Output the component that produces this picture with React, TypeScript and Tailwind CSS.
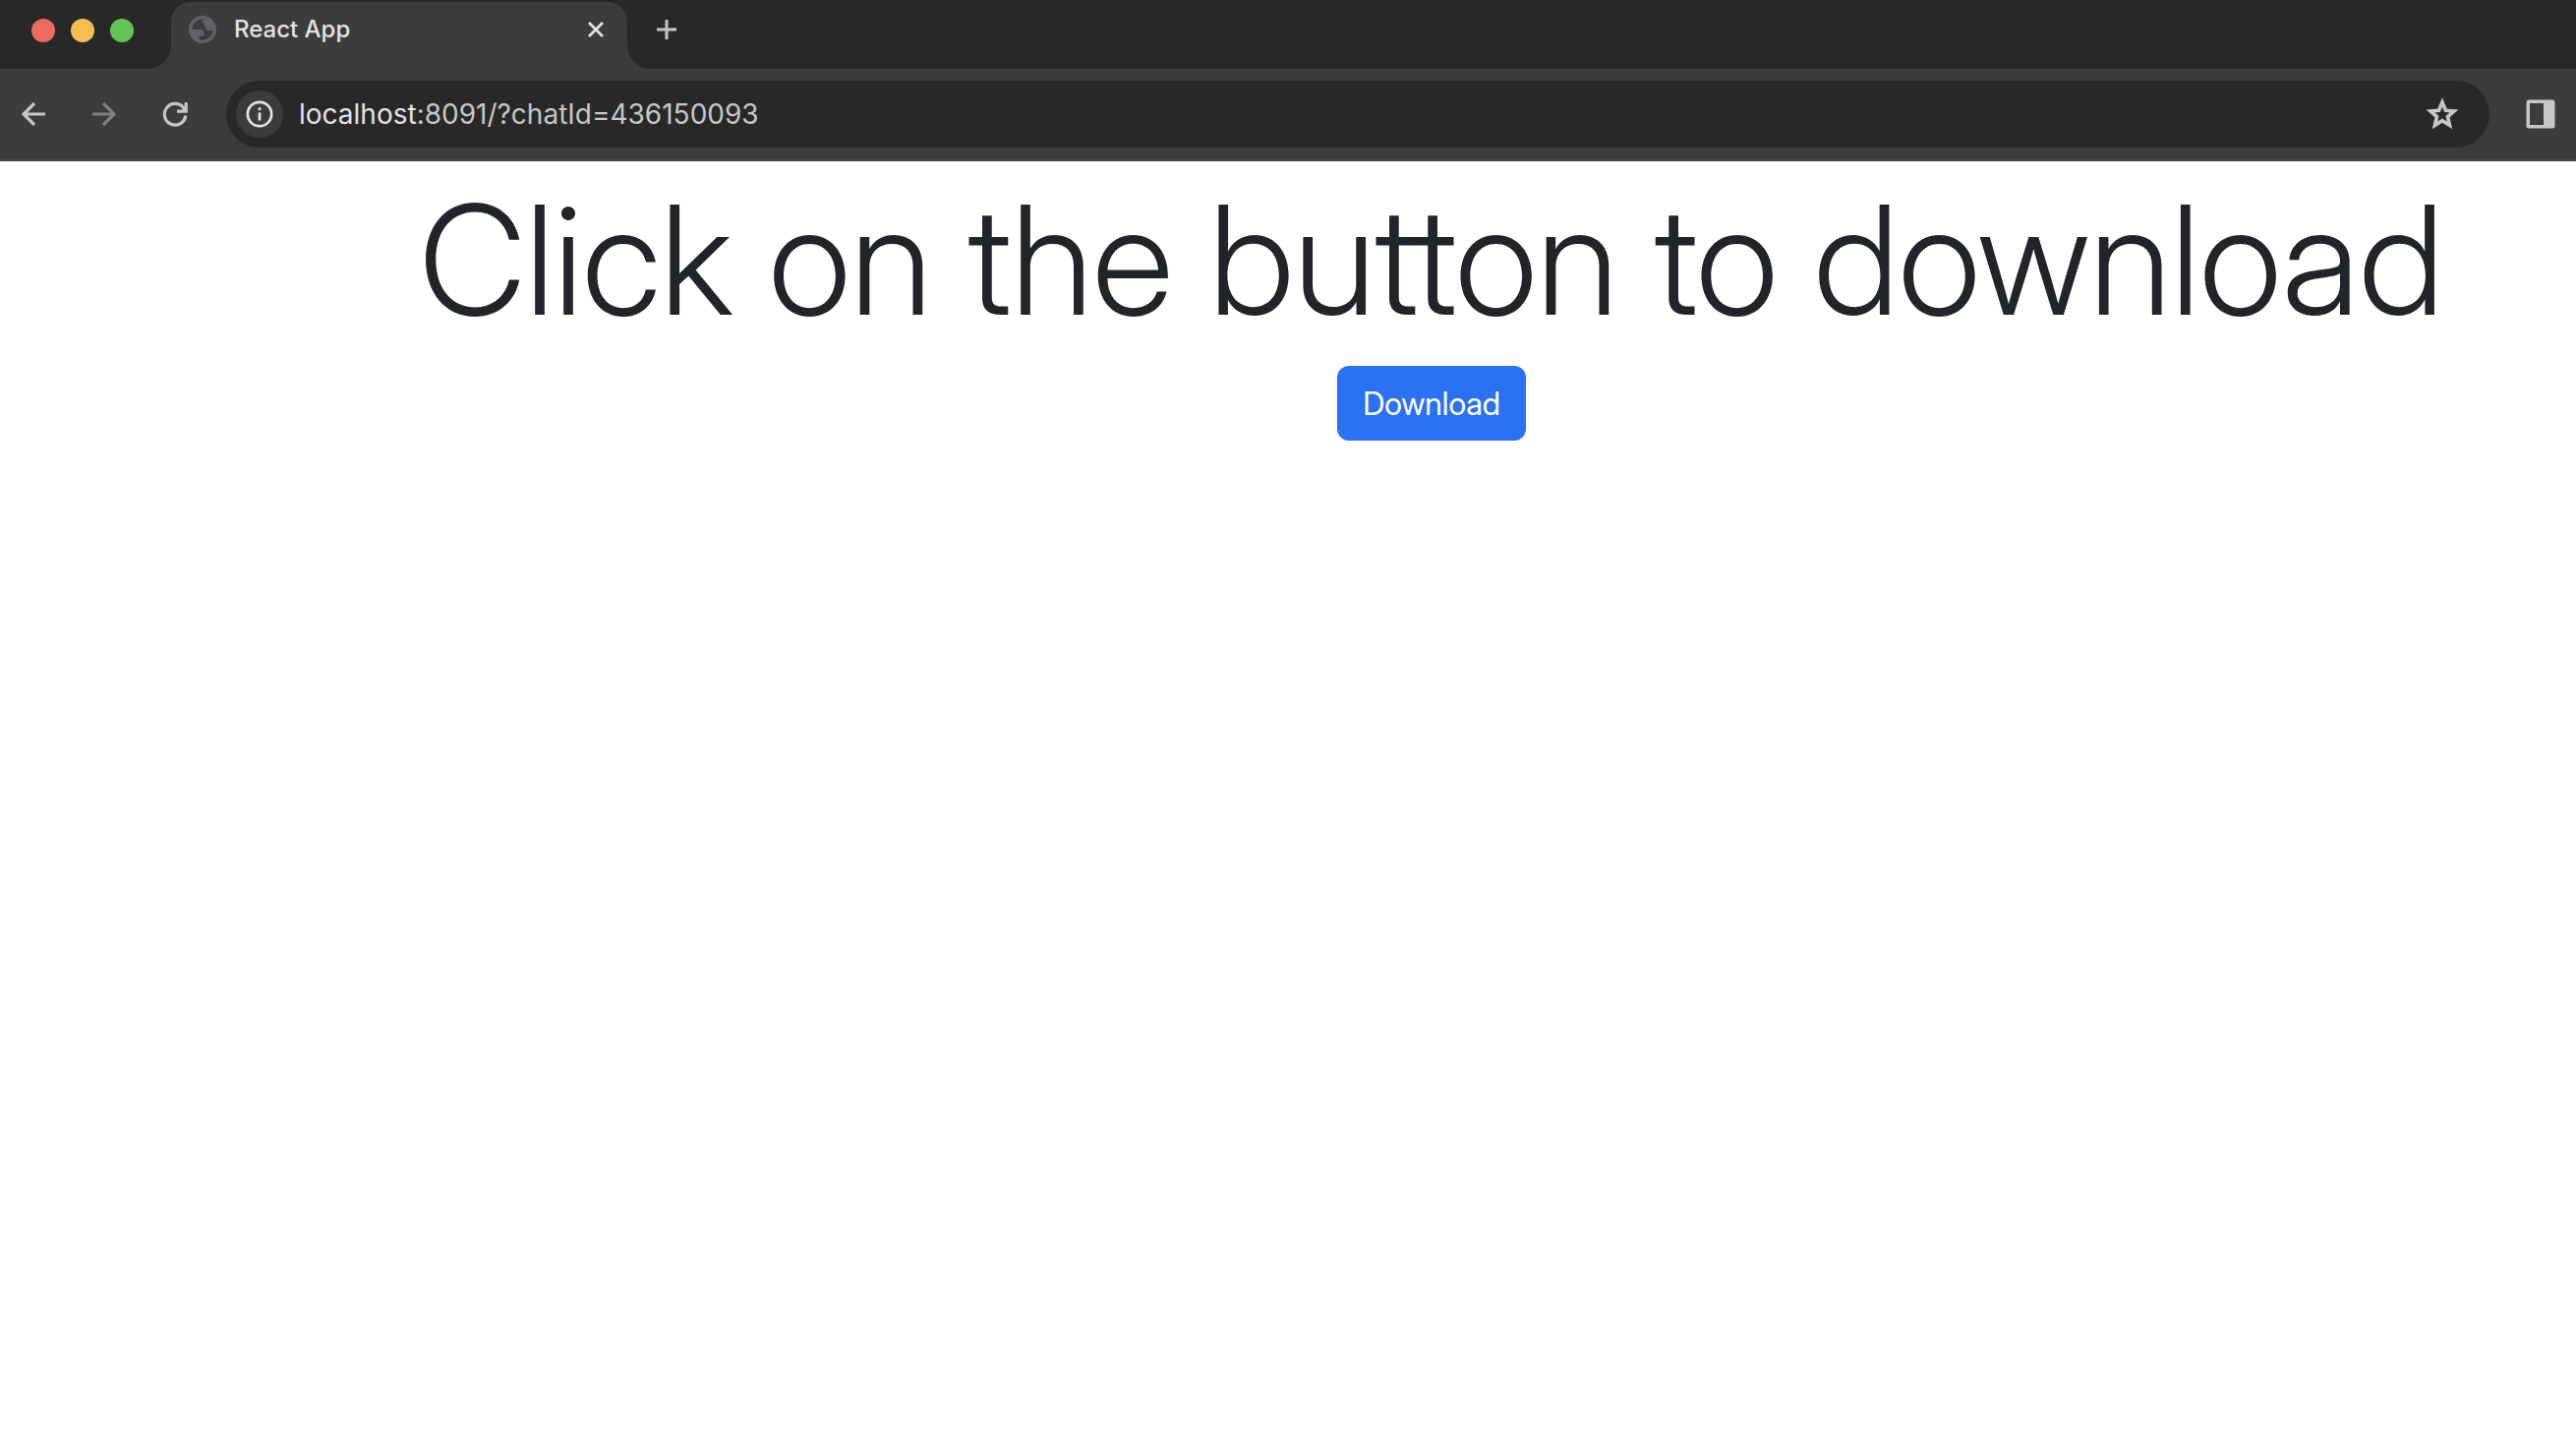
import type { ReactNode } from "react";

function IconButton({ label, className, children }: { label: string; className: string; children: ReactNode }) {
  return (
    <button type="button" aria-label={label} className={`flex shrink-0 items-center justify-center ${className}`}>
      {children}
    </button>
  );
}

function Globe() {
  return (
    <svg viewBox="0 0 28 28" className="size-7 shrink-0" aria-hidden="true">
      <circle cx="14" cy="14" r="14" fill="#5f6368" />
      <path
        fill="#3c3c3c"
        d="M3.3 14C3.4 8 8 3.3 14 3.2C15.2 3.6 15 4.6 13.6 5.5C12.400 6.2 12.600 7 14 7.1H15.2C15.6 10 16 10.600 17.500 11.200C16.600 14 19.500 15.400 22 15H24.700C24.200 20.500 19.600 24.700 14 24.700C12.500 24.700 11.300 24.400 10.300 24V20.800H13.500C15 20.800 15.800 19.800 15.800 18.500C15.800 15.800 14 14 11.400 14Z"
      />
    </svg>
  );
}

function Tab() {
  return (
    <div className="relative mt-0.5 ml-[38px] flex h-[68px] w-[464px] items-start rounded-t-[20px] bg-[#3c3c3c] pt-3 pr-[22px] pl-[18px]">
      <span className="absolute bottom-0 -left-6 size-6 overflow-hidden bg-[#3c3c3c]">
        <span className="block size-6 rounded-br-[24px] bg-[#282828]" />
      </span>
      <span className="absolute -right-6 bottom-0 size-6 overflow-hidden bg-[#3c3c3c]">
        <span className="block size-6 rounded-bl-[24px] bg-[#282828]" />
      </span>
      <div className="flex h-8 w-full items-center">
        <Globe />
        <span className="ml-[18px] grow text-2xl font-medium text-[#e3e3e3]">React App</span>
        <IconButton label="Close tab" className="size-5 text-[#e3e3e3]">
          <svg viewBox="0 0 20 20" className="size-5" fill="none" stroke="currentColor" strokeWidth="2.800">
            <path d="M3 3l14 14M17 3L3 17" />
          </svg>
        </IconButton>
      </div>
    </div>
  );
}

function AddressBar() {
  return (
    <div className="ml-[34px] flex h-[68px] grow items-center rounded-full bg-[#282828] pr-7 pl-2.5">
      <IconButton label="View site information" className="size-12 rounded-full bg-[#3c3c3c] text-[#e3e3e3]">
        <svg viewBox="0 0 28 28" className="size-7" fill="none" stroke="currentColor">
          <circle cx="14" cy="14" r="12.200" strokeWidth="2.700" />
          <path d="M14 12.500V20.500" strokeWidth="2.900" />
          <circle cx="14" cy="8.700" r="1.600" fill="currentColor" stroke="none" />
        </svg>
      </IconButton>
      <a href="#address" aria-label="Address" className="ml-4 grow text-[28px] text-[#c7c7c7]">
        <span className="text-[#e3e3e3]">localhost</span>:8091/?chatId=436150093
      </a>
      <IconButton label="Bookmark this tab" className="size-10 text-[#c7c7c7]">
        <svg viewBox="0 0 24 24" className="size-10" fill="none" stroke="currentColor" strokeWidth="2.200">
          <path d="M12 4.800L14.100 9.800L19.200 10.200L15.300 13.600L16.500 18.800L12 16L7.500 18.800L8.700 13.600L4.800 10.200L9.900 9.800Z" strokeMiterlimit="10" />
        </svg>
      </IconButton>
    </div>
  );
}

function BrowserChrome() {
  return (
    <header>
      <div className="flex h-[70px] bg-[#282828]">
        <div className="flex gap-4 pt-[19px] pl-8">
          <button type="button" aria-label="Close window" className="size-6 rounded-full bg-[#ed6a5e]" />
          <button type="button" aria-label="Minimize window" className="size-6 rounded-full bg-[#f5bf4f]" />
          <button type="button" aria-label="Zoom window" className="size-6 rounded-full bg-[#61c554]" />
        </div>
        <Tab />
        <IconButton label="New tab" className="mt-3.5 ml-6 size-8 text-[#c7c7c7]">
          <svg viewBox="0 0 20 20" className="size-5" fill="none" stroke="currentColor" strokeWidth="3">
            <path d="M10 0V20M0 10H20" />
          </svg>
        </IconButton>
      </div>
      <div className="flex h-[94px] items-center border-b-2 border-[#4a4a4a] bg-[#3c3c3c] pr-[18px] pl-4">
        <div className="flex gap-9">
          <IconButton label="Back" className="size-9 text-[#c7c7c7]">
            <svg viewBox="0 0 24 24" className="size-6" fill="none" stroke="currentColor" strokeWidth="3.200">
              <path d="M24 12H2.500M13 1L2 12l11 11" />
            </svg>
          </IconButton>
          <IconButton label="Forward" className="size-9 text-[#7f7f7f]">
            <svg viewBox="0 0 24 24" className="size-6" fill="none" stroke="currentColor" strokeWidth="3.200">
              <path d="M0 12H21.500M11 1l11 11-11 11" />
            </svg>
          </IconButton>
          <IconButton label="Reload" className="size-9 text-[#c7c7c7]">
            <svg viewBox="0 0 26 26" className="size-[26px]" fill="none" stroke="currentColor" strokeWidth="3.200">
              <path d="M23.800 14.500A10.800 10.800 0 1 1 21.500 6.500L23 9" />
              <path d="M15 10.200H24.200V1" />
              <path d="M24.500 5L19 10.500h5.500z" fill="currentColor" stroke="none" />
            </svg>
          </IconButton>
        </div>
        <AddressBar />
        <IconButton label="Side panel" className="ml-[34px] size-9 text-[#c7c7c7]">
          <svg viewBox="0 0 30 30" className="size-[30px]" fill="currentColor">
            <path fillRule="evenodd" d="M3 0.500H27A2.500 2.500 0 0 1 29.500 3V27A2.500 2.500 0 0 1 27 29.500H3A2.500 2.500 0 0 1 0.500 27V3A2.500 2.500 0 0 1 3 0.500ZM4 4V26H18V4Z" />
          </svg>
        </IconButton>
      </div>
    </header>
  );
}

export default function App() {
  return (
    <div className="min-h-screen bg-white font-['Inter',sans-serif]">
      <BrowserChrome />
      <main className="flex flex-col items-center pt-1 pl-[292px] font-['Inter_Display','Inter',sans-serif]">
        <h1 className="mb-3 text-[154px] leading-[192px] font-light whitespace-nowrap text-[#212529]">
          Click on the button to download
        </h1>
        <button type="button" className="rounded-xl bg-[#2b71f3] px-[26px] pt-[15px] pb-[13px] text-[32px] leading-[48px] text-white">
          Download
        </button>
      </main>
    </div>
  );
}
